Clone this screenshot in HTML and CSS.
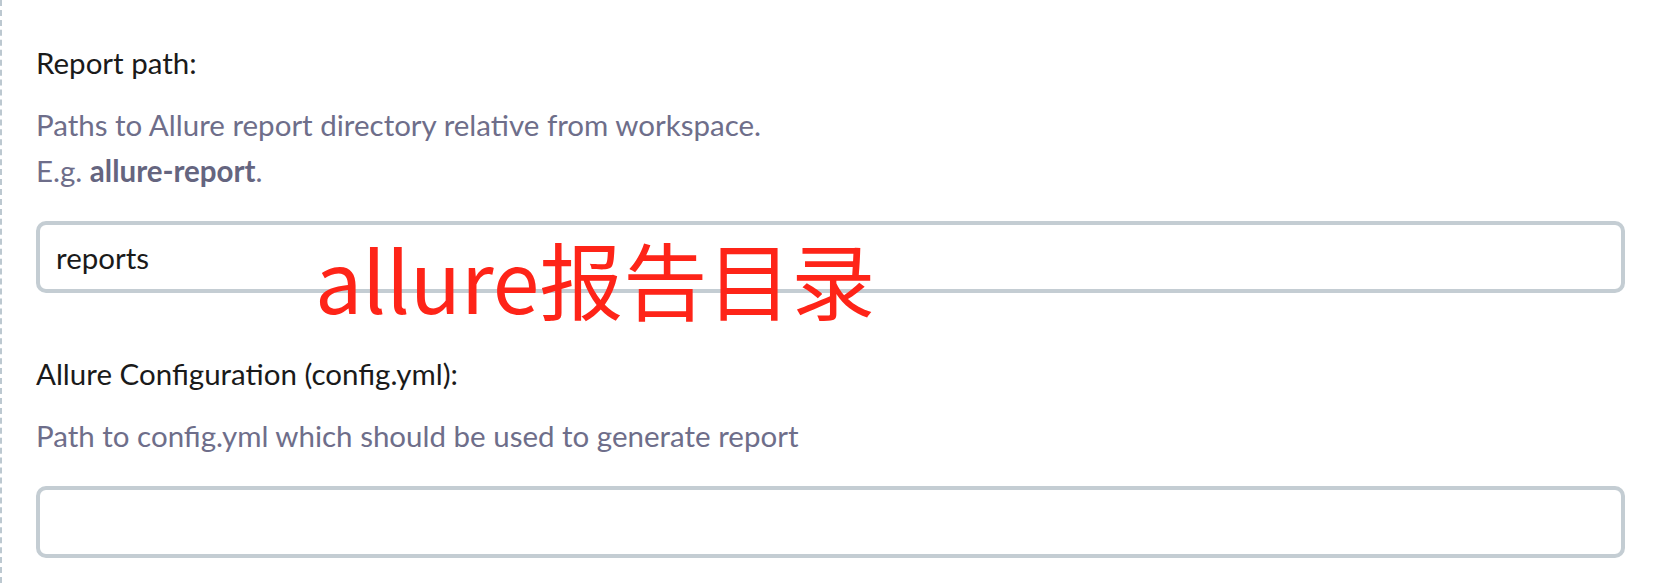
FILE: index.html
```html
<!DOCTYPE html>
<html lang="en">
<head>
	<meta charset="UTF-8">
	<meta name="viewport" content="width=device-width, initial-scale=1.0">
	<title>Allure Report</title>

	<link rel="stylesheet" href="styles.css">
</head>
<body>
	<div class="section">
		<div class="field">
			<div class="label">Report path:</div>
			<div class="help">
				Paths to Allure report directory relative from workspace.<br>
				E.g. <b>allure-report</b>.
			</div>
			<div class="input-wrap">
				<input class="input" type="text" value="reports">
				<span class="note">allure报告目录</span>
			</div>
		</div>

		<div class="field">
			<div class="label">Allure Configuration (config.yml):</div>
			<div class="help">Path to config.yml which should be used to generate report</div>
			<div class="input-wrap">
				<input class="input" type="text" value="">
			</div>
		</div>
	</div>
</body>
</html>
```

FILE: styles.css
```css
html, body {
	margin: 0;
	padding: 0;
	background: #fff;
}

body {
	font-family: Lato, "Open Sans", sans-serif;
	font-size: 29.5px;
	color: #1a1a1a;
}

.section {
	border-left: 2px dashed #bcc8d0;
	padding: 40px 34px 20px 34px;
	min-height: 583px;
	box-sizing: border-box;
}

.field {
	display: flex;
	flex-direction: column;
}

.field + .field {
	margin-top: 58px;
}

.label {
	line-height: 46px;
}

.help {
	color: #6e6e8a;
	line-height: 46px;
	margin-top: 16px;
}

.help b {
	font-weight: 700;
	color: #65657f;
}

.input-wrap {
	position: relative;
	margin-top: 27px;
}

.input {
	display: block;
	width: 100%;
	box-sizing: border-box;
	height: 72px;
	border: 4px solid #c4cdd3;
	border-radius: 10px;
	padding: 0 16px;
	font-family: inherit;
	font-size: 29.5px;
	color: #1a1a1a;
	background: #fff;
	outline: none;
}

.note {
	position: absolute;
	left: 279px;
	top: 15px;
	font-family: "Noto Sans CJK SC", sans-serif;
	font-size: 84px;
	line-height: 1;
	color: #fe2418;
	white-space: nowrap;
	pointer-events: none;
}
```
